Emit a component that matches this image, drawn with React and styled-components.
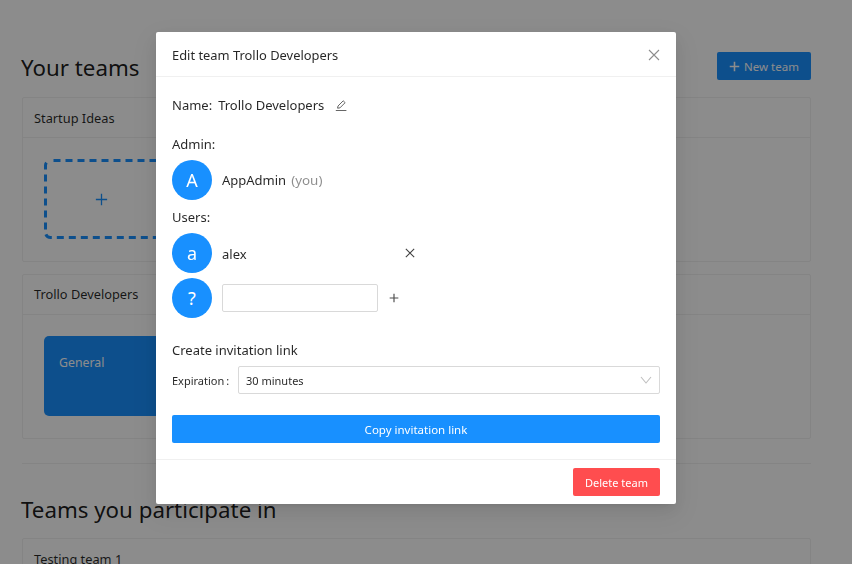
import React from "react";
import styled, { createGlobalStyle } from "styled-components";

const Global = createGlobalStyle`
  html, body { margin: 0; padding: 0; height: 564px; overflow: hidden; background: #fff; }
  body { font-family: "Noto Sans", "Open Sans", sans-serif; font-size: 14px; color: rgba(0,0,0,.85); }
  * { box-sizing: border-box; }
`;

const Page = styled.main`
  width: 852px;
  height: 564px;
  overflow: hidden;
  padding: 52px 41px 0 22px;
`;
const TitleRow = styled.div`
  display: flex;
  justify-content: space-between;
  align-items: flex-start;
  height: 45px;
`;
const Heading = styled.h2`
  margin: 1px 0 0 -1px;
  font-size: 22.3px;
  font-weight: 400;
  line-height: 30px;
  color: rgba(0,0,0,.9);
`;
const NewTeam = styled.button`
  width: 94px;
  height: 28px;
  border: 0;
  border-radius: 2px;
  background: #1890ff;
  color: #fff;
  font: 400 11.5px "Noto Sans", sans-serif;
  display: flex;
  align-items: center;
  justify-content: center;
  gap: 4px;
  padding: 0;
`;
const Card = styled.section`
  border: 1px solid #f0f0f0;
  border-radius: 2px;
  margin-bottom: 12px;
`;
const CardHead = styled.div`
  height: 40px;
  padding: 0 11px ${p => p.$lift || 0}px;
  display: flex;
  align-items: center;
  font-size: 12.8px;
  border-bottom: 1px solid #f0f0f0;
`;
const CardBody = styled.div`
  padding: 21px 21px;
  height: 123px;
`;
const Tile = styled.div`
  position: relative;
  width: 220px;
  height: 80px;
  border-radius: 5px;
  display: flex;
  color: ${p => (p.$add ? "#1890ff" : "#fff")};
  background: ${p => (p.$add ? "transparent" : "#1890ff")};
  align-items: ${p => (p.$add ? "center" : "flex-start")};
  padding: ${p => (p.$add ? "0 0 0 51px" : "18px 15px")};
  font-size: 12.3px;
  line-height: 18px;
`;
const DashOutline = styled.svg`
  position: absolute;
  inset: 0;
  pointer-events: none;
`;
const Rule = styled.hr`
  border: 0;
  border-top: 1px solid #f0f0f0;
  margin: 24px 0 31px;
`;
const SecondHeading = styled(Heading)`
  height: 43px;
`;
const Mask = styled.div`
  position: fixed;
  inset: 0;
  background: rgba(0,0,0,.45);
`;
const Modal = styled.div`
  position: fixed;
  left: 156px;
  top: 32px;
  width: 520px;
  height: 472px;
  background: #fff;
  border-radius: 2px;
  box-shadow: 0 3px 6px -4px rgba(0,0,0,.12), 0 6px 16px rgba(0,0,0,.08), 0 9px 28px 8px rgba(0,0,0,.05);
  display: flex;
  flex-direction: column;
`;
const ModalHead = styled.header`
  height: 45px;
  flex: none;
  padding: 1px 16px 0;
  border-bottom: 1px solid #f0f0f0;
  display: flex;
  align-items: center;
  justify-content: space-between;
  font-size: 12.9px;
`;
const IconButton = styled.span`
  display: inline-flex;
  color: ${p => p.$color || "rgba(0,0,0,.6)"};
`;
const ModalBody = styled.div`
  flex: 1;
  padding: 18px 16px 0;
  font-size: 13px;
`;
const NameRow = styled.div`
  display: flex;
  align-items: center;
  height: 20px;
  margin-bottom: 19px;
`;
const NameLabel = styled.span`
  margin-right: 6px;
`;
const NameValue = styled.span`
  margin-right: 11px;
`;
const Label = styled.div`
  line-height: 20px;
  height: 26px;
  margin-top: ${p => p.$mt || 0}px;
`;
const PersonRow = styled.div`
  display: flex;
  align-items: center;
  height: 40px;
  margin-bottom: ${p => p.$mb || 0}px;
`;
const Avatar = styled.span`
  width: 40px;
  height: 40px;
  flex: none;
  border-radius: 50%;
  background: #1890ff;
  color: #fff;
  font-size: 18px;
  display: flex;
  align-items: center;
  justify-content: center;
  margin-right: 10px;
`;
const Muted = styled.span`
  color: rgba(0,0,0,.45);
  margin-left: 5px;
  font-size: 13.4px;
`;
const UserName = styled.span`
  width: 183px;
  padding-top: 2px;
`;
const AddInput = styled.input`
  width: 156px;
  height: 28px;
  border: 1px solid #d9d9d9;
  border-radius: 2px;
  margin-right: 11px;
  outline: 0;
`;
const InviteTitle = styled.div`
  margin-top: 22px;
  line-height: 20px;
`;
const ExpireRow = styled.div`
  display: flex;
  align-items: center;
  margin-top: 6px;
  height: 28px;
  font-size: 11px;
`;
const ExpireLabel = styled.span`
  width: 66px;
  flex: none;
  word-spacing: -1px;
`;
const Select = styled.div`
  flex: 1;
  height: 28px;
  border: 1px solid #d9d9d9;
  border-radius: 2px;
  display: flex;
  align-items: center;
  justify-content: space-between;
  padding: 0 7px;
`;
const Copy = styled.button`
  display: block;
  width: 100%;
  height: 28px;
  margin-top: 21px;
  border: 0;
  border-radius: 2px;
  background: #1890ff;
  color: #fff;
  font: 400 11.5px "Noto Sans", sans-serif;
`;
const ModalFoot = styled.footer`
  height: 45px;
  flex: none;
  padding: 8px 16px;
  border-top: 1px solid #f0f0f0;
  display: flex;
  justify-content: flex-end;
`;
const Delete = styled.button`
  width: 87px;
  height: 28px;
  border: 0;
  border-radius: 2px;
  background: #ff4d4f;
  color: #fff;
  font: 400 11px "Noto Sans", sans-serif;
`;

const Plus = ({ size = 12, w = 1.1 }) => (
  <svg width={size} height={size} viewBox="0 0 12 12" fill="none" stroke="currentColor" strokeWidth={w}>
    <path d="M6 .8v10.4M.8 6h10.4" />
  </svg>
);
const Cross = ({ size = 12, w = 1.1 }) => (
  <svg width={size} height={size} viewBox="0 0 12 12" fill="none" stroke="currentColor" strokeWidth={w}>
    <path d="M1 1l10 10M11 1L1 11" />
  </svg>
);
const Pencil = () => (
  <svg width="12" height="12" viewBox="0 0 12 12" fill="none" stroke="currentColor" strokeWidth="1">
    <path d="M.8 11.5h10.6M2.6 9.2l.4-2.2L8.2 1.8l1.9 1.9-5.2 5.2z" />
  </svg>
);
const Chevron = () => (
  <svg width="12" height="8" viewBox="0 0 12 8" fill="none" stroke="#bfbfbf" strokeWidth="1.1">
    <path d="M1 1l5 6 5-6" />
  </svg>
);

export default function App() {
  return (
    <>
      <Global />
      <Page>
        <TitleRow>
          <Heading>Your teams</Heading>
          <NewTeam><Plus size={11} w={1.7} />New team</NewTeam>
        </TitleRow>
        <Card>
          <CardHead>Startup Ideas</CardHead>
          <CardBody>
            <Tile $add>
              <DashOutline width="220" height="80" fill="none" stroke="#1890ff" strokeWidth="3">
                <rect x="1.5" y="1.5" width="217" height="77" rx="5" strokeDasharray="7 5" strokeDashoffset="-3" />
              </DashOutline>
              <Plus size={13} w={1.2} />
            </Tile>
          </CardBody>
        </Card>
        <Card>
          <CardHead $lift={2}>Trollo Developers</CardHead>
          <CardBody><Tile>General</Tile></CardBody>
        </Card>
        <Rule />
        <SecondHeading>Teams you participate in</SecondHeading>
        <Card>
          <CardHead>Testing team 1</CardHead>
        </Card>
      </Page>
      <Mask />
      <Modal>
        <ModalHead>
          Edit team Trollo Developers
          <IconButton $color="rgba(0,0,0,.45)"><Cross /></IconButton>
        </ModalHead>
        <ModalBody>
          <NameRow>
            <NameLabel>Name:</NameLabel>
            <NameValue>Trollo Developers</NameValue>
            <IconButton><Pencil /></IconButton>
          </NameRow>
          <Label>Admin:</Label>
          <PersonRow>
            <Avatar>A</Avatar>AppAdmin<Muted>(you)</Muted>
          </PersonRow>
          <Label $mt={7}>Users:</Label>
          <PersonRow $mb={5}>
            <Avatar>a</Avatar>
            <UserName>alex</UserName>
            <IconButton $color="rgba(0,0,0,.75)"><Cross size={10} w={1.3} /></IconButton>
          </PersonRow>
          <PersonRow>
            <Avatar>?</Avatar>
            <AddInput aria-label="User name" />
            <IconButton $color="rgba(0,0,0,.7)"><Plus size={10} w={1.4} /></IconButton>
          </PersonRow>
          <InviteTitle>Create invitation link</InviteTitle>
          <ExpireRow>
            <ExpireLabel>Expiration :</ExpireLabel>
            <Select>30 minutes<Chevron /></Select>
          </ExpireRow>
          <Copy>Copy invitation link</Copy>
        </ModalBody>
        <ModalFoot>
          <Delete>Delete team</Delete>
        </ModalFoot>
      </Modal>
    </>
  );
}
